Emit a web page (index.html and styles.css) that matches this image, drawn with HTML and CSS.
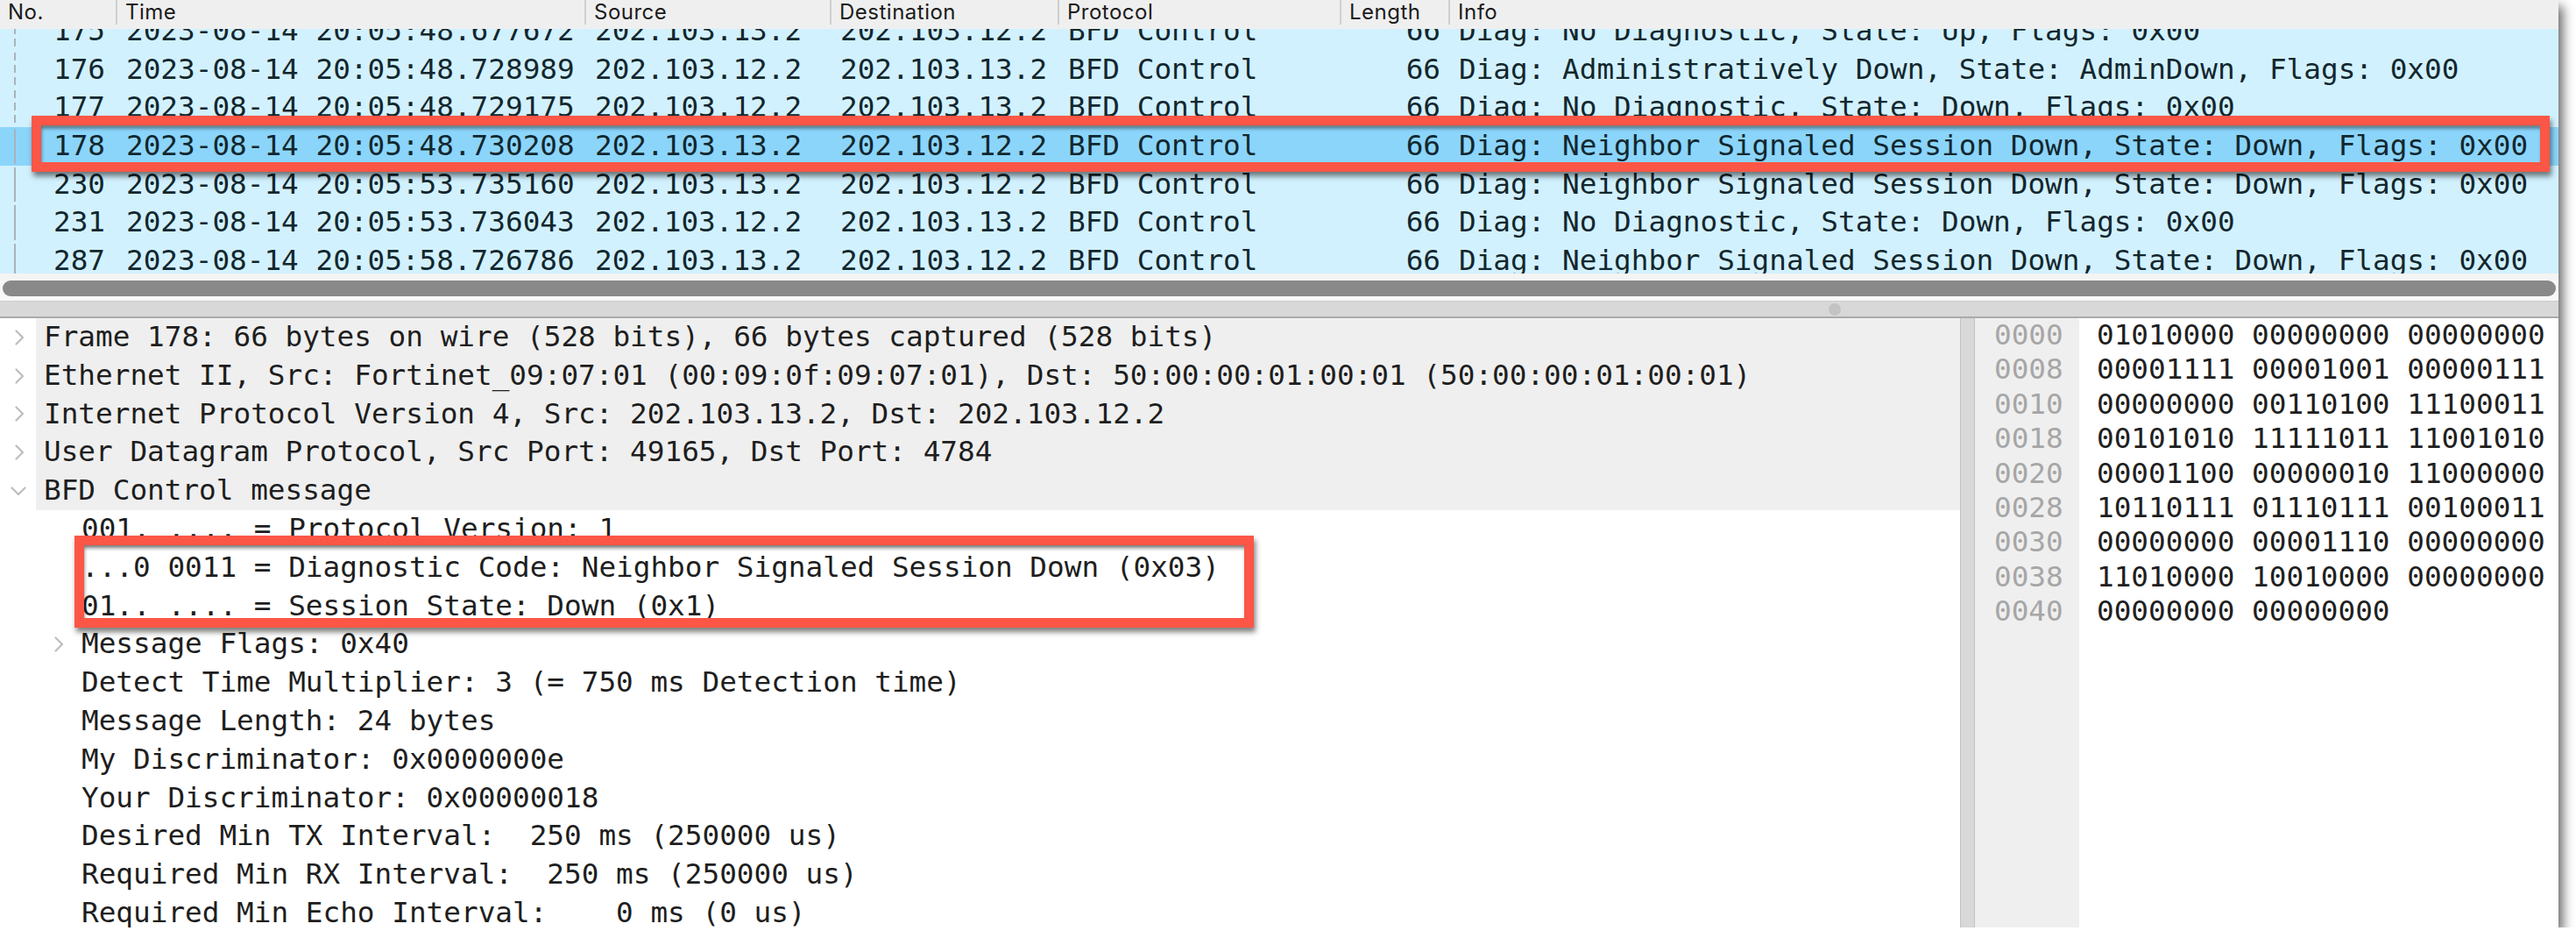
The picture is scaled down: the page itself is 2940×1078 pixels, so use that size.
FILE: index.html
```html
<!DOCTYPE html>
<html lang="en">
<head>
<meta charset="utf-8">
<title>Wireshark BFD</title>
<link rel="stylesheet" href="styles.css">
</head>
<body>
<div class="window">
  <div class="plist">
    <div class="phead">
      <div class="hc">No.</div>
      <div class="hc sep">Time</div>
      <div class="hc sep">Source</div>
      <div class="hc sep">Destination</div>
      <div class="hc sep">Protocol</div>
      <div class="hc sep">Length</div>
      <div class="hc sep">Info</div>
    </div>
    <div class="pview">
      <div class="prows">
        <div class="prow dash"><span class="c num">175</span><span class="c">2023-08-14 20:05:48.677672</span><span class="c">202.103.13.2</span><span class="c">202.103.12.2</span><span class="c">BFD Control</span><span class="c len">66</span><span class="c">Diag: No Diagnostic, State: Up, Flags: 0x00</span></div>
        <div class="prow dash"><span class="c num">176</span><span class="c">2023-08-14 20:05:48.728989</span><span class="c">202.103.12.2</span><span class="c">202.103.13.2</span><span class="c">BFD Control</span><span class="c len">66</span><span class="c">Diag: Administratively Down, State: AdminDown, Flags: 0x00</span></div>
        <div class="prow dash"><span class="c num">177</span><span class="c">2023-08-14 20:05:48.729175</span><span class="c">202.103.12.2</span><span class="c">202.103.13.2</span><span class="c">BFD Control</span><span class="c len">66</span><span class="c">Diag: No Diagnostic, State: Down, Flags: 0x00</span></div>
        <div class="prow sel"><span class="c num">178</span><span class="c">2023-08-14 20:05:48.730208</span><span class="c">202.103.13.2</span><span class="c">202.103.12.2</span><span class="c">BFD Control</span><span class="c len">66</span><span class="c">Diag: Neighbor Signaled Session Down, State: Down, Flags: 0x00</span></div>
        <div class="prow"><span class="c num">230</span><span class="c">2023-08-14 20:05:53.735160</span><span class="c">202.103.13.2</span><span class="c">202.103.12.2</span><span class="c">BFD Control</span><span class="c len">66</span><span class="c">Diag: Neighbor Signaled Session Down, State: Down, Flags: 0x00</span></div>
        <div class="prow"><span class="c num">231</span><span class="c">2023-08-14 20:05:53.736043</span><span class="c">202.103.12.2</span><span class="c">202.103.13.2</span><span class="c">BFD Control</span><span class="c len">66</span><span class="c">Diag: No Diagnostic, State: Down, Flags: 0x00</span></div>
        <div class="prow"><span class="c num">287</span><span class="c">2023-08-14 20:05:58.726786</span><span class="c">202.103.13.2</span><span class="c">202.103.12.2</span><span class="c">BFD Control</span><span class="c len">66</span><span class="c">Diag: Neighbor Signaled Session Down, State: Down, Flags: 0x00</span></div>
      </div>
    </div>
  </div>

  <div class="hscroll"><div class="thumb"></div></div>
  <div class="splitter"><span class="handle"></span></div>

  <div class="detail">
    <div class="tree">
      <div class="trow top"><span class="tw"><svg class="chev" width="11" height="18" viewBox="0 0 11 18"><polyline points="1.5,1.5 9,9 1.5,16.5"/></svg></span><span class="tt">Frame 178: 66 bytes on wire (528 bits), 66 bytes captured (528 bits)</span></div>
      <div class="trow top"><span class="tw"><svg class="chev" width="11" height="18" viewBox="0 0 11 18"><polyline points="1.5,1.5 9,9 1.5,16.5"/></svg></span><span class="tt">Ethernet II, Src: Fortinet_09:07:01 (00:09:0f:09:07:01), Dst: 50:00:00:01:00:01 (50:00:00:01:00:01)</span></div>
      <div class="trow top"><span class="tw"><svg class="chev" width="11" height="18" viewBox="0 0 11 18"><polyline points="1.5,1.5 9,9 1.5,16.5"/></svg></span><span class="tt">Internet Protocol Version 4, Src: 202.103.13.2, Dst: 202.103.12.2</span></div>
      <div class="trow top"><span class="tw"><svg class="chev" width="11" height="18" viewBox="0 0 11 18"><polyline points="1.5,1.5 9,9 1.5,16.5"/></svg></span><span class="tt">User Datagram Protocol, Src Port: 49165, Dst Port: 4784</span></div>
      <div class="trow top"><span class="tw down"><svg class="chev" width="18" height="11" viewBox="0 0 18 11"><polyline points="1.5,1.5 9,9 16.5,1.5"/></svg></span><span class="tt">BFD Control message</span></div>
      <div class="trow kid"><span class="tw"></span><span class="tt">001. .... = Protocol Version: 1</span></div>
      <div class="trow kid"><span class="tw"></span><span class="tt">...0 0011 = Diagnostic Code: Neighbor Signaled Session Down (0x03)</span></div>
      <div class="trow kid"><span class="tw"></span><span class="tt">01.. .... = Session State: Down (0x1)</span></div>
      <div class="trow kid"><span class="tw"><svg class="chev" width="11" height="18" viewBox="0 0 11 18"><polyline points="1.5,1.5 9,9 1.5,16.5"/></svg></span><span class="tt">Message Flags: 0x40</span></div>
      <div class="trow kid"><span class="tw"></span><span class="tt">Detect Time Multiplier: 3 (= 750 ms Detection time)</span></div>
      <div class="trow kid"><span class="tw"></span><span class="tt">Message Length: 24 bytes</span></div>
      <div class="trow kid"><span class="tw"></span><span class="tt">My Discriminator: 0x0000000e</span></div>
      <div class="trow kid"><span class="tw"></span><span class="tt">Your Discriminator: 0x00000018</span></div>
      <div class="trow kid"><span class="tw"></span><span class="tt">Desired Min TX Interval:  250 ms (250000 us)</span></div>
      <div class="trow kid"><span class="tw"></span><span class="tt">Required Min RX Interval:  250 ms (250000 us)</span></div>
      <div class="trow kid"><span class="tw"></span><span class="tt">Required Min Echo Interval:    0 ms (0 us)</span></div>
    </div>
    <div class="vdiv"></div>
    <div class="bytes">
      <div class="offs">
        <div class="bl">0000</div><div class="bl">0008</div><div class="bl">0010</div><div class="bl">0018</div><div class="bl">0020</div><div class="bl">0028</div><div class="bl">0030</div><div class="bl">0038</div><div class="bl">0040</div>
      </div>
      <div class="bins">
        <div class="bl">01010000 00000000 00000000</div>
        <div class="bl">00001111 00001001 00000111</div>
        <div class="bl">00000000 00110100 11100011</div>
        <div class="bl">00101010 11111011 11001010</div>
        <div class="bl">00001100 00000010 11000000</div>
        <div class="bl">10110111 01110111 00100011</div>
        <div class="bl">00000000 00001110 00000000</div>
        <div class="bl">11010000 10010000 00000000</div>
        <div class="bl">00000000 00000000</div>
      </div>
    </div>
  </div>

  <div class="mark mark-pkt"></div>
  <div class="mark mark-tree"></div>
</div>
</body>
</html>
```

FILE: styles.css
```css
* { box-sizing: border-box; }

html, body {
  margin: 0;
  padding: 0;
  background: #ffffff;
}

.window {
  position: relative;
  width: 2920px;
  height: 1058px;
  background: #ffffff;
  overflow: hidden;
  box-shadow: 5px 7px 12px rgba(0, 0, 0, 0.6);
  font-family: "DejaVu Sans Mono", "Liberation Mono", monospace;
  font-size: 32.7px;
}

/* ---------- packet list ---------- */
.plist {
  height: 312px;
  display: flex;
  flex-direction: column;
  background: #d2f1fe;
}

.phead,
.prow {
  display: grid;
  grid-template-columns: 132px 535px 280px 260px 322px 124px 1fr;
}

.phead {
  height: 33px;
  flex: none;
  background: #efefef;
  position: relative;
  z-index: 1;
  font-family: "Inter", "Liberation Sans", sans-serif;
  font-size: 24px;
  letter-spacing: 0.5px;
  color: #1b1b1b;
  align-items: start;
}

.hc {
  height: 28px;
  line-height: 28px;
  padding-left: 9px;
  white-space: nowrap;
  overflow: hidden;
}

.hc.sep {
  border-left: 2px solid #cfcfcf;
}

.pview {
  flex: 1;
  overflow: hidden;
}

.prows {
  margin-top: -18.8px;
}

.prow {
  position: relative;
  height: 43.6px;
  line-height: 43.6px;
  color: #12272e;
  white-space: pre;
}

.prow::before {
  content: "";
  position: absolute;
  left: 16px;
  top: 2px;
  bottom: 2px;
  width: 2px;
  background: #a9b4b8;
}

.prow.dash::before {
  background: repeating-linear-gradient(to bottom, #a9b4b8 0 9px, transparent 9px 14px);
}

.prow.sel {
  background: #8bd5fb;
}

.c {
  padding: 0 12px;
  overflow: hidden;
}

.c.num {
  text-align: right;
  padding-right: 12px;
}

.c.len {
  text-align: right;
  padding-right: 9px;
}

/* ---------- scroll + splitter ---------- */
.hscroll {
  height: 31px;
  padding-top: 8px;
  background: linear-gradient(to bottom, #f4f4f4 0 8px, #f8f8f8 8px);
}

.thumb {
  height: 18px;
  margin-left: 3px;
  margin-right: 3px;
  border-radius: 9px;
  background: #898989;
}

.splitter {
  height: 20px;
  border-top: 1px solid #cdcdcd;
  border-bottom: 2px solid #ababab;
  background: #d8d8d8;
  display: flex;
  align-items: center;
  padding-left: 2087px;
}

.handle {
  width: 14px;
  height: 14px;
  border-radius: 50%;
  background: #c3c3c3;
}

/* ---------- detail ---------- */
.detail {
  height: 695px;
  display: flex;
}

.tree {
  width: 2237px;
  flex: none;
  color: #1e1e1e;
}

.trow {
  display: flex;
  height: 43.8px;
  line-height: 43.8px;
  white-space: pre;
}

.tw {
  flex: none;
  display: flex;
  align-items: center;
}

.trow.top .tw {
  width: 41px;
  padding-left: 17px;
}

.trow.top .tw.down {
  padding-left: 12px;
}

.trow.top .tt {
  flex: 1;
  background: #efefef;
  padding-left: 9px;
}

.trow.kid .tw {
  width: 85px;
  padding-left: 62px;
}

.trow.kid .tt {
  padding-left: 8px;
}

.chev {
  display: block;
}

.chev polyline {
  fill: none;
  stroke: #bdbdbd;
  stroke-width: 2.2;
  stroke-linecap: round;
  stroke-linejoin: round;
}

.vdiv {
  width: 17px;
  flex: none;
  background: #d8d8d8;
  border-left: 1px solid #c2c2c2;
  border-right: 1px solid #c2c2c2;
}

.bytes {
  flex: 1;
  display: flex;
}

.bl {
  height: 39.4px;
  line-height: 39.4px;
  white-space: pre;
}

.offs {
  width: 119px;
  flex: none;
  background: #efefef;
  padding-left: 22px;
  color: #a6a6a6;
}

.bins {
  padding-left: 20px;
  color: #202020;
}

/* ---------- annotation boxes ---------- */
.mark {
  position: absolute;
  border: 11px solid #fc5646;
  box-shadow: 2px 5px 6px rgba(0, 0, 0, 0.5), inset 1px 4px 4px -1px rgba(0, 0, 0, 0.55);
  z-index: 5;
}

.mark-pkt {
  left: 36px;
  top: 132px;
  width: 2874px;
  height: 64px;
}

.mark-tree {
  left: 85px;
  top: 611px;
  width: 1346px;
  height: 105px;
}
```
